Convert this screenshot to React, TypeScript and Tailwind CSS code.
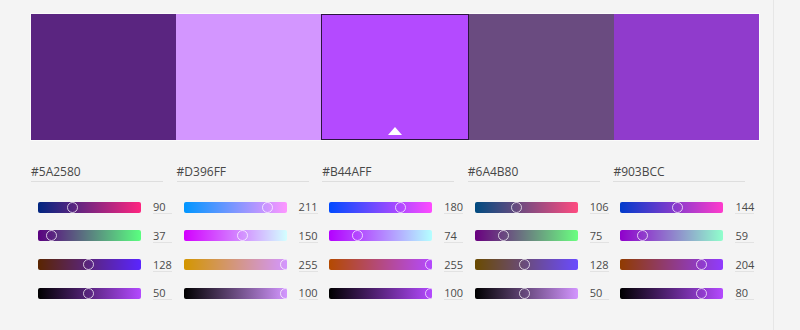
import React from "react";

type C = { hex: string; r: number; g: number; b: number };

const COLORS: C[] = [
  { hex: "5A2580", r: 0x5a, g: 0x25, b: 0x80 },
  { hex: "D396FF", r: 0xd3, g: 0x96, b: 0xff },
  { hex: "B44AFF", r: 0xb4, g: 0x4a, b: 0xff },
  { hex: "6A4B80", r: 0x6a, g: 0x4b, b: 0x80 },
  { hex: "903BCC", r: 0x90, g: 0x3b, b: 0xcc },
];

const SELECTED = 2;
const TRACK_W = 103;

function rgb(r: number, g: number, b: number) {
  return `rgb(${Math.round(r)},${Math.round(g)},${Math.round(b)})`;
}

function Slider({ from, to, value, max }: { from: string; to: string; value: number; max: number }) {
  const center = (TRACK_W * value) / max - 1.5;
  return (
    <div className="flex h-[28.67px] items-center pl-[7px]">
      <div
        className="relative h-[11px] w-[103px] overflow-hidden rounded-[2px]"
        style={{ background: `linear-gradient(to right, ${from}, ${to})` }}
      >
        <div
          className="absolute top-0 h-[11px] w-[11px] rounded-full border-[1.5px] border-[#ffffffbb]"
          style={{ left: center - 5.5 }}
        />
      </div>
      <div className="ml-[12px] h-[14px] w-[19px] border-b border-[#e2e2e2] text-[11px] leading-[13px] text-[#4a4a4a]">
        {value}
      </div>
    </div>
  );
}

function Column({ c }: { c: C }) {
  const mx = Math.max(c.r, c.g, c.b);
  const v = Math.round((mx / 255) * 100);
  const k = 255 / mx;
  return (
    <div className="flex-1">
      <div className="mt-[23px] w-[132px] border-b border-[#dedede] pb-[1px] text-[12px] leading-[16px] text-[#474747]">
        #{c.hex}
      </div>
      <div className="mt-[11px]">
        <Slider from={rgb(0, c.g, c.b)} to={rgb(255, c.g, c.b)} value={c.r} max={255} />
        <Slider from={rgb(c.r, 0, c.b)} to={rgb(c.r, 255, c.b)} value={c.g} max={255} />
        <Slider from={rgb(c.r, c.g, 0)} to={rgb(c.r, c.g, 255)} value={c.b} max={255} />
        <Slider from="rgb(0,0,0)" to={rgb(c.r * k, c.g * k, c.b * k)} value={v} max={100} />
      </div>
    </div>
  );
}

export default function App() {
  return (
    <div
      className="flex h-[330px] w-[800px] bg-[#f4f4f4]"
      style={{ fontFamily: '"Open Sans", "Noto Sans", sans-serif' }}
    >
      <div className="h-full w-[774px] border-r border-[#e6e6e6] pl-[30px] pt-[13px]">
        <div className="flex h-[128px] w-[730px] border border-[#fbfbfb]">
          {COLORS.map((c, i) => (
            <div
              key={c.hex}
              className={
                i === SELECTED
                  ? "relative flex-1 border border-[#2c1440]"
                  : "relative flex-1"
              }
              style={{ backgroundColor: `#${c.hex}` }}
            >
              {i === SELECTED && (
                <div className="absolute bottom-[4px] left-1/2 h-0 w-0 -translate-x-1/2 border-b-[8px] border-l-[7.5px] border-r-[7.5px] border-b-white border-l-transparent border-r-transparent" />
              )}
            </div>
          ))}
        </div>
        <div className="flex w-[729px] pl-[1px]">
          {COLORS.map((c) => (
            <Column key={c.hex} c={c} />
          ))}
        </div>
      </div>
      <div className="flex-1" />
    </div>
  );
}
